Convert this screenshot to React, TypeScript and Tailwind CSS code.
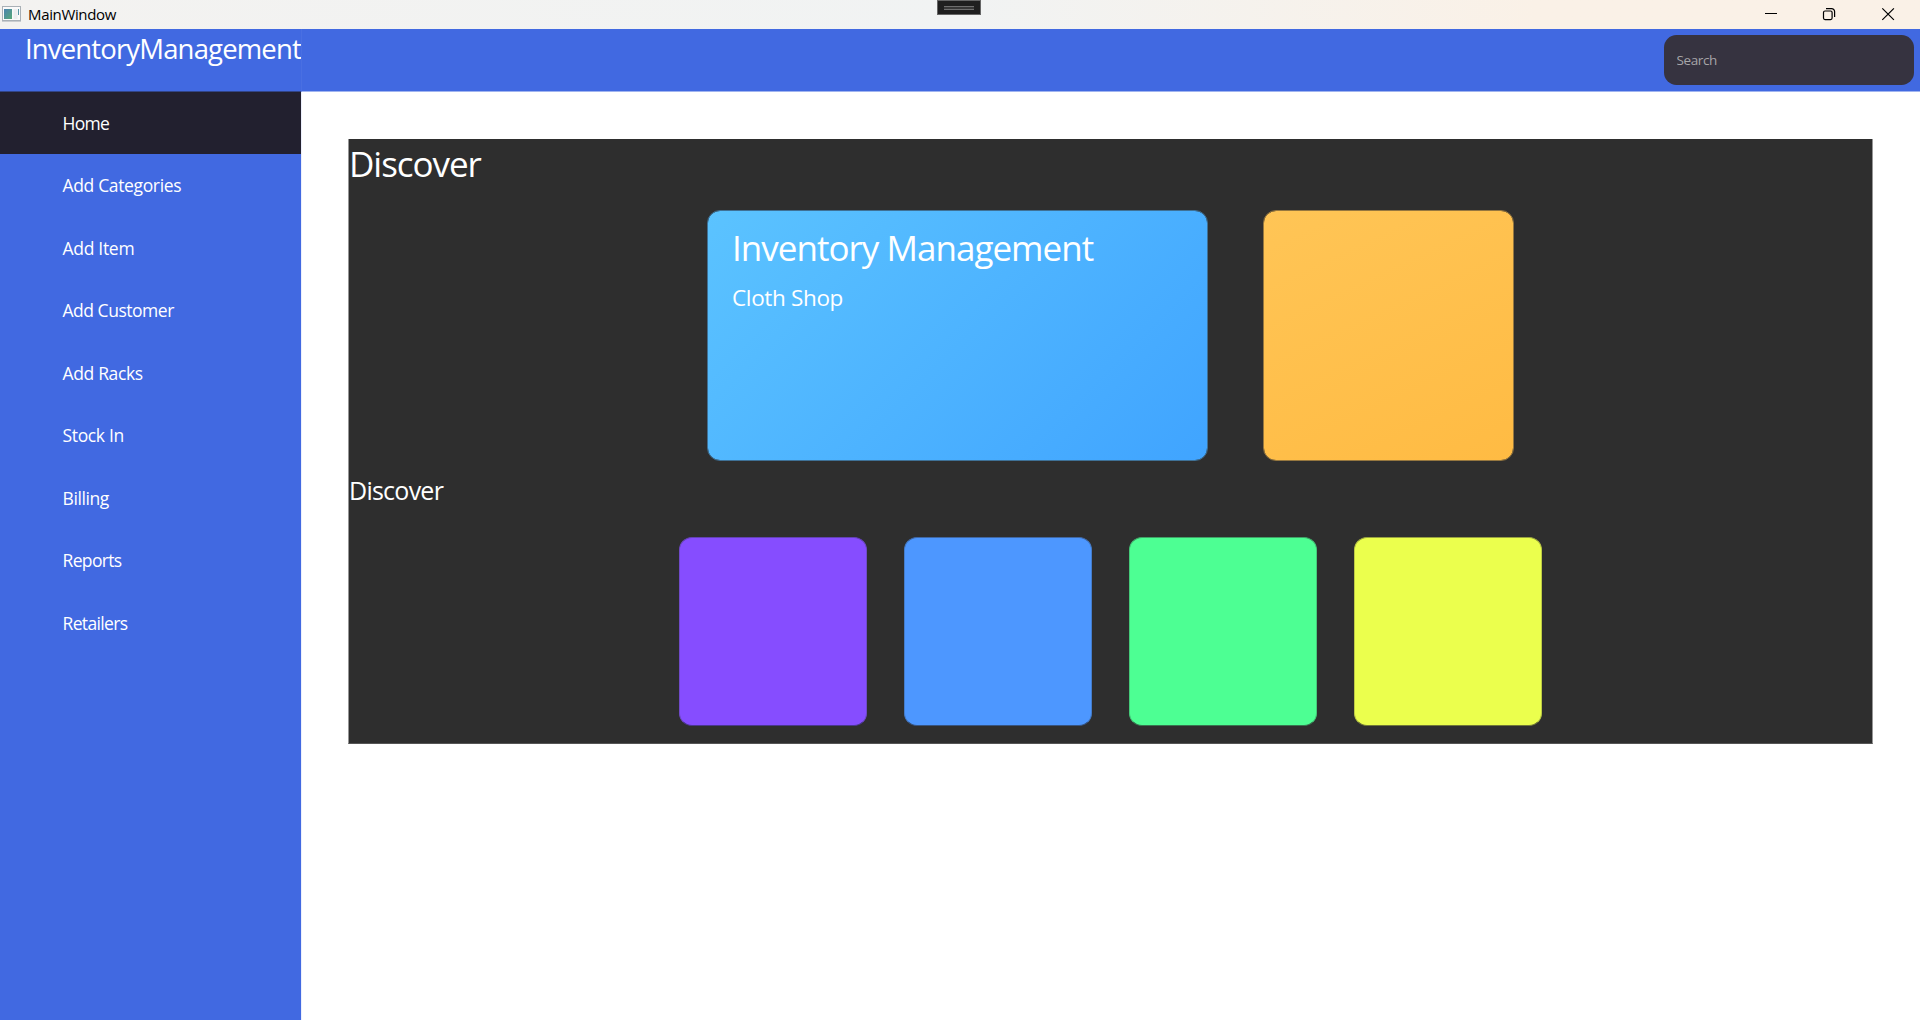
const navItems = [
  { label: 'Home', tracking: 'tracking-[-0.7px]', active: true },
  { label: 'Add Categories', tracking: 'tracking-[-0.35px]' },
  { label: 'Add Item', tracking: 'tracking-[-0.3px]' },
  { label: 'Add Customer', tracking: 'tracking-[-0.48px]' },
  { label: 'Add Racks', tracking: 'tracking-[-0.35px]' },
  { label: 'Stock In', tracking: 'tracking-[-0.35px]' },
  { label: 'Billing', tracking: 'tracking-[-0.4px]' },
  { label: 'Reports', tracking: 'tracking-[-0.65px]' },
  { label: 'Retailers', tracking: 'tracking-[-0.65px]' },
];

const tiles = [
  'bg-[#864dff] border-x-[#704ac9] border-t-[#6341b3] border-b-[#4a378e]',
  'bg-[#4d97ff] border-x-[#457dcb] border-t-[#4067a3] border-b-[#375480]',
  'bg-[#4dff93] border-x-[#45ca7a] border-t-[#3fa367] border-b-[#387550]',
  'bg-[#ebff4d] border-x-[#bcca45] border-t-[#97a23f] border-b-[#707838]',
];

function TitleBar() {
  return (
    <div className="flex h-[29px] shrink-0 items-start justify-between bg-linear-to-r from-[#f3f2f0] via-[#f1f3f3] via-50% to-[#faf1e7] to-80% text-black">
      <div className="flex h-[29px] w-[937px]">
        <svg className="ml-0.5 mt-1.5 h-4 w-[19px]" viewBox="0 0 19 16">
          <defs>
            <linearGradient id="pane" x1="0" y1="0" x2="1" y2="1">
              <stop offset="0" stopColor="#4a83b0" />
              <stop offset="1" stopColor="#56a878" />
            </linearGradient>
          </defs>
          <rect x="0.5" y="0.5" width="18" height="14" fill="#fafafa" stroke="#a9b0b6" />
          <path d="M0 15.5h19" stroke="#c9cccf" />
          <rect x="2" y="3" width="8" height="10" fill="url(#pane)" />
          <rect x="11.5" y="3" width="4" height="10" fill="#eceef0" />
          <path d="M16.5 3v6" stroke="#5a97a8" />
        </svg>
        <span className="ml-[7px] text-[15px] leading-7 tracking-[-0.35px]">MainWindow</span>
      </div>
      <div className="flex h-[15px] w-11 items-center justify-center border border-[#666] bg-[#1f1f1f] pt-px">
        <div className="h-1 w-[30px] border-y border-[#6e6e6e] bg-[#383838]" />
      </div>
      <div className="flex h-[29px] flex-1 justify-end">
        <svg className="mt-[7px] h-3.5 w-[155px]" viewBox="0 0 155 14" fill="none" stroke="#000">
          <path d="M0 6.5h12" />
          <rect x="58.5" y="4" width="8.6" height="8.6" rx="1.5" strokeWidth="1.2" />
          <path d="M61 1.6h5.6a3 3 0 0 1 3 3V10" strokeWidth="1.2" />
          <path d="M117.3 1.3l11.6 11.6M128.9 1.3L117.3 12.9" strokeWidth="1.2" />
        </svg>
      </div>
    </div>
  );
}

function Header() {
  return (
    <header className="flex h-[63px] shrink-0 bg-[#4169e1]">
      <div className="w-[301px] border-b border-[#324588] pl-[25px] pt-px">
        <h1 className="text-[27.5px] leading-[37px] tracking-[-0.85px] whitespace-nowrap">InventoryManagement</h1>
      </div>
      <div className="flex flex-1 justify-end border-b border-l border-b-[#a0b4f0] border-l-[#496fe2] pr-1.5 pt-1.5">
        <input
          type="text"
          placeholder="Search"
          className="h-[50px] w-[250px] rounded-[12.5px] bg-[#363340] pb-0 pl-[12.5px] pt-0 text-[13.5px] tracking-[-0.4px] outline-none placeholder:text-[#a6a5a8]"
        />
      </div>
    </header>
  );
}

function Sidebar() {
  return (
    <nav className="w-[301px] shrink-0 bg-[#4169e1]">
      {navItems.map((item) => (
        <div
          key={item.label}
          className={`flex items-center pl-[62.5px] text-[17.5px] ${item.tracking} ${item.active ? 'h-[62px] bg-[#22202f]' : 'h-[62.5px]'}`}
        >
          {item.label}
        </div>
      ))}
    </nav>
  );
}

function Dashboard() {
  return (
    <main className="flex-1 border-l border-[#eceffc] bg-white pl-[46px] pr-[47px] pt-[47px]">
      <section className="h-[605px] border-x border-b border-x-[#969696] border-b-[#555] bg-[#2e2e2e]">
        <h2 className="h-[71px] text-[35px] leading-[49px] tracking-[-1.05px]">Discover</h2>
        <div className="flex justify-center gap-[55px]">
          <article className="h-[251px] w-[501px] rounded-[13px] border border-[#3f7196] bg-linear-[135deg,#5bc3ff,#40a4ff] bg-clip-padding pl-[24px] pt-[13px]">
            <h3 className="text-[35px] leading-[47px] tracking-[-0.98px]">Inventory Management</h3>
            <p className="mt-3 text-[22.5px] leading-[30px] tracking-[-0.35px]">Cloth Shop</p>
          </article>
          <article className="h-[251px] w-[251px] rounded-[13px] border border-[#96773f] bg-linear-[155deg,#ffc556,#ffbb43] bg-clip-padding" />
        </div>
        <h2 className="h-[76px] text-[25px] leading-[59px] tracking-[-0.75px]">Discover</h2>
        <div className="flex justify-center gap-[37px]">
          {tiles.map((tile) => (
            <article key={tile} className={`h-[189px] w-[188px] rounded-[13px] border ${tile}`} />
          ))}
        </div>
      </section>
    </main>
  );
}

export default function App() {
  return (
    <div className="flex h-screen flex-col overflow-hidden font-['Open_Sans',sans-serif] text-white">
      <TitleBar />
      <Header />
      <div className="flex min-h-0 flex-1">
        <Sidebar />
        <Dashboard />
      </div>
    </div>
  );
}
